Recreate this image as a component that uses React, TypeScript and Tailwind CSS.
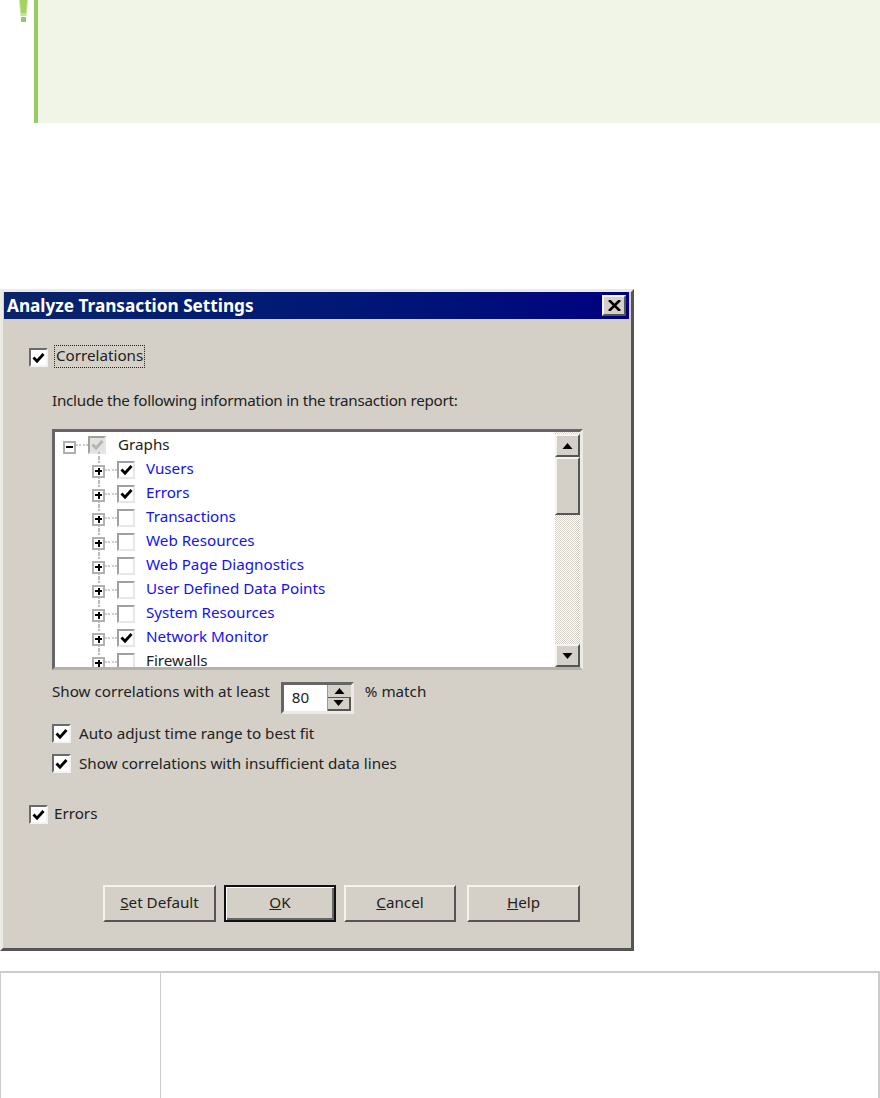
import React from "react";

const FONT = "font-['Noto_Sans','Liberation_Sans',sans-serif]";

const treeItems = [
  { label: "Vusers", checked: true, blue: true },
  { label: "Errors", checked: true, blue: true },
  { label: "Transactions", checked: false, blue: true },
  { label: "Web Resources", checked: false, blue: true },
  { label: "Web Page Diagnostics", checked: false, blue: true },
  { label: "User Defined Data Points", checked: false, blue: true },
  { label: "System Resources", checked: false, blue: true },
  { label: "Network Monitor", checked: true, blue: true },
  { label: "Firewalls", checked: false, blue: false },
];

function Check({ color = "#000" }: { color?: string }) {
  return (
    <svg width="13" height="12" viewBox="0 0 13 12" className="block">
      <path d="M1.5 5.5 L5 9.2 L11.5 2" fill="none" stroke={color} strokeWidth="2.9" />
    </svg>
  );
}

// classic sunken win2k checkbox
function Checkbox({ checked }: { checked?: boolean }) {
  return (
    <div className="w-[19px] h-[19px] shrink-0 bg-white flex items-center justify-center border-t-2 border-l-2 border-t-[#6a6a6a] border-l-[#6a6a6a] border-r-2 border-b-2 border-r-[#f4f3ef] border-b-[#f4f3ef]">
      {checked && <Check />}
    </div>
  );
}

function TreeCheckbox({ checked, disabled }: { checked?: boolean; disabled?: boolean }) {
  return (
    <div className={`w-[18px] h-[18px] shrink-0 flex items-center justify-center border-t-2 border-l-2 border-r-2 border-b-2 border-t-[#a0a0a0] border-l-[#a0a0a0] border-r-[#e6e6e6] border-b-[#e6e6e6] ${disabled ? "bg-[#e4e2dd]" : "bg-white"}`}>
      {checked && <Check color={disabled ? "#b5b5b5" : "#000"} />}
    </div>
  );
}

function Expander({ open }: { open?: boolean }) {
  return (
    <div className={`w-[13px] h-[13px] shrink-0 bg-white border-2 border-[#b0b0b0] flex items-center justify-center relative ${open ? "mt-[4px]" : "mt-[2px]"}`}>
      <div className="absolute w-[7px] h-[2px] bg-black" />
      {!open && <div className="absolute w-[2px] h-[7px] bg-black" />}
    </div>
  );
}

function TreeRow({ label, checked, blue }: { label: string; checked: boolean; blue: boolean }) {
  return (
    <div className="h-[24px] flex items-center pl-[37px] relative shrink-0">
      <div className="absolute left-[43px] top-0 h-[24px] border-l-2 border-dotted border-[#bbb]" />
      <Expander />
      <div className="w-[12px] border-t-2 border-dotted border-[#ccc]" />
      <TreeCheckbox checked={checked} />
      <span className={`ml-[11px] mb-[2px] ${blue ? "text-[#1010ff]" : "text-[#222]"}`}>{label}</span>
    </div>
  );
}

function Btn({ children, def, className = "" }: { children: React.ReactNode; def?: boolean; className?: string }) {
  return (
    <div className={`h-[37px] flex items-center justify-center bg-[#d4d0c8] text-[#222] ${def ? "border-2 border-[#111] shadow-[inset_1px_1px_0_#fff,inset_-2px_-2px_0_#666]" : "border-t-2 border-l-2 border-r-2 border-b-2 border-t-[#f4f3ef] border-l-[#f4f3ef] border-r-[#555] border-b-[#555]"} ${className}`}>
      {children}
    </div>
  );
}

function Arrow({ down }: { down?: boolean }) {
  return (
    <svg width="11" height="6" viewBox="0 0 11 6" className="block">
      <path d={down ? "M0.5 0 H10.5 L5.5 6 Z" : "M0.5 6 H10.5 L5.5 0 Z"} fill="#000" />
    </svg>
  );
}

export default function App() {
  return (
    <div className={`w-[880px] h-[1098px] overflow-hidden bg-white ${FONT}`}>
      {/* note callout, text is blank in the capture */}
      <div className="flex h-[123px]">
        <div className="w-[34px] pl-[19px] shrink-0">
          <svg width="10" height="23" viewBox="0 0 10 23" className="block">
            <path d="M0 0 H9 L7.5 16 H1.5 Z" fill="#c4e29c" />
            <path d="M1 0 H8 L6.8 13 H2.2 Z" fill="#a3d35f" />
            <rect x="2" y="17" width="5" height="5" fill="#9bc463" />
          </svg>
        </div>
        <div className="flex-1 bg-[#f0f5e7] border-l-4 border-[#98cc62]" />
      </div>

      {/* dialog */}
      <div className="mt-[166px] w-[634px] h-[662px] bg-[#d4d0c8] border-t-[3px] border-l-[3px] border-r-[3px] border-b-[3px] border-t-[#eceae5] border-l-[#eceae5] border-r-[#555] border-b-[#555] text-[15.2px] text-[#222] leading-none">
        <div className="h-[27px] mx-[1px] mr-[2px] flex items-center justify-between bg-gradient-to-r from-[#0a246a] to-[#000080] pl-[3px] pr-[3px]">
          <span className="text-white font-bold text-[17.2px]">Analyze Transaction Settings</span>
          <div className="w-[24px] h-[21px] bg-[#d4d0c8] flex items-center justify-center border-t-2 border-l-2 border-r-2 border-b-2 border-t-[#f4f3ef] border-l-[#f4f3ef] border-r-[#555] border-b-[#555]">
            <svg width="13" height="11" viewBox="0 0 13 11" className="block">
              <path d="M1 0 L12 11 M12 0 L1 11" stroke="#000" strokeWidth="2.6" fill="none" />
            </svg>
          </div>
        </div>

        <div className="pl-[26px]">
          <div className="mt-[29px] flex items-center h-[19px]">
            <Checkbox checked />
            <span className="ml-[6px] mb-[2px] px-[1px] pb-[2px] h-[23px] flex items-center border border-dotted border-[#222]">Correlations</span>
          </div>

          <div className="pl-[23px]">
            <div className="mt-[24px] h-[20px] flex items-center tracking-[-0.25px]">Include the following information in the transaction report:</div>

            {/* tree */}
            <div className="mt-[18px] w-[531px] h-[241px] border-t-[3px] border-l-[3px] border-t-[#666] border-l-[#666] border-r-[3px] border-b-[3px] border-r-[#eceae5] border-b-[#b5b2ab] bg-white flex overflow-hidden">
              <div className="flex-1 min-w-0 overflow-hidden">
                <div className="h-[26px] flex items-center pl-[8px] relative">
                  <div className="absolute left-[43px] top-[20px] h-[6px] border-l-2 border-dotted border-[#bbb]" />
                  <Expander open />
                  <div className="w-[12px] border-t-2 border-dotted border-[#ccc]" />
                  <TreeCheckbox checked disabled />
                  <span className="ml-[12px] text-[#222]">Graphs</span>
                </div>
                {treeItems.map((t) => (
                  <TreeRow key={t.label} {...t} />
                ))}
              </div>
              {/* scrollbar */}
              <div className="w-[25px] shrink-0 flex flex-col bg-[repeating-conic-gradient(#d4d0c8_0_25%,#fff_0_50%)] bg-[length:2px_2px]">
                <div className="h-[23px] mt-[2px] bg-[#d4d0c8] flex items-center justify-center border-2 border-t-[#f4f3ef] border-l-[#f4f3ef] border-r-[#555] border-b-[#555]">
                  <Arrow />
                </div>
                <div className="h-[58px] bg-[#d4d0c8] border-2 border-t-[#f4f3ef] border-l-[#f4f3ef] border-r-[#555] border-b-[#555]" />
                <div className="flex-1" />
                <div className="h-[23px] bg-[#d4d0c8] flex items-center justify-center border-2 border-t-[#f4f3ef] border-l-[#f4f3ef] border-r-[#555] border-b-[#555]">
                  <Arrow down />
                </div>
              </div>
            </div>

            <div className="mt-[12px] h-[32px] flex items-center">
              <span className="mb-[12px]">Show correlations with at least</span>
              <div className="ml-[11px] w-[73px] h-[32px] bg-white flex items-stretch border-t-[3px] border-l-[3px] border-t-[#666] border-l-[#666] border-r-[3px] border-b-[3px] border-r-[#eceae5] border-b-[#eceae5]">
                <span className="flex-1 pl-[8px] flex items-center">80</span>
                <div className="w-[24px] flex flex-col bg-[#d4d0c8] border-l border-[#999]">
                  <div className="flex-1 flex items-center justify-center border-b border-[#555]"><Arrow /></div>
                  <div className="flex-1 flex items-center justify-center border-b-2 border-r-2 border-[#555]"><Arrow down /></div>
                </div>
              </div>
              <span className="ml-[11px] mb-[12px]">% match</span>
            </div>

            <div className="mt-[10px] flex items-center h-[19px]">
              <Checkbox checked />
              <span className="ml-[8px]">Auto adjust time range to best fit</span>
            </div>
            <div className="mt-[11px] flex items-center h-[19px]">
              <Checkbox checked />
              <span className="ml-[8px]">Show correlations with insufficient data lines</span>
            </div>
          </div>

          <div className="mt-[32px] flex items-center h-[19px]">
            <Checkbox checked />
            <span className="ml-[6px] mb-[2px]">Errors</span>
          </div>

          <div className="mt-[61px] ml-[74px] flex">
            <Btn className="w-[113px]"><span className="mb-[2px]"><u>S</u>et Default</span></Btn>
            <Btn def className="w-[112px] ml-[8px]"><span className="mb-[2px]"><u>O</u>K</span></Btn>
            <Btn className="w-[112px] ml-[8px]"><span className="mb-[2px]"><u>C</u>ancel</span></Btn>
            <Btn className="w-[113px] ml-[11px]"><span className="mb-[2px]"><u>H</u>elp</span></Btn>
          </div>
        </div>
      </div>

      {/* table below, cells are empty in the capture */}
      <div className="mt-[20px] w-[880px] h-[127px] flex border-t-2 border-r-2 border-l border-[#ccc]">
        <div className="w-[160px] border-r border-[#ccc]" />
        <div className="flex-1" />
      </div>
    </div>
  );
}
